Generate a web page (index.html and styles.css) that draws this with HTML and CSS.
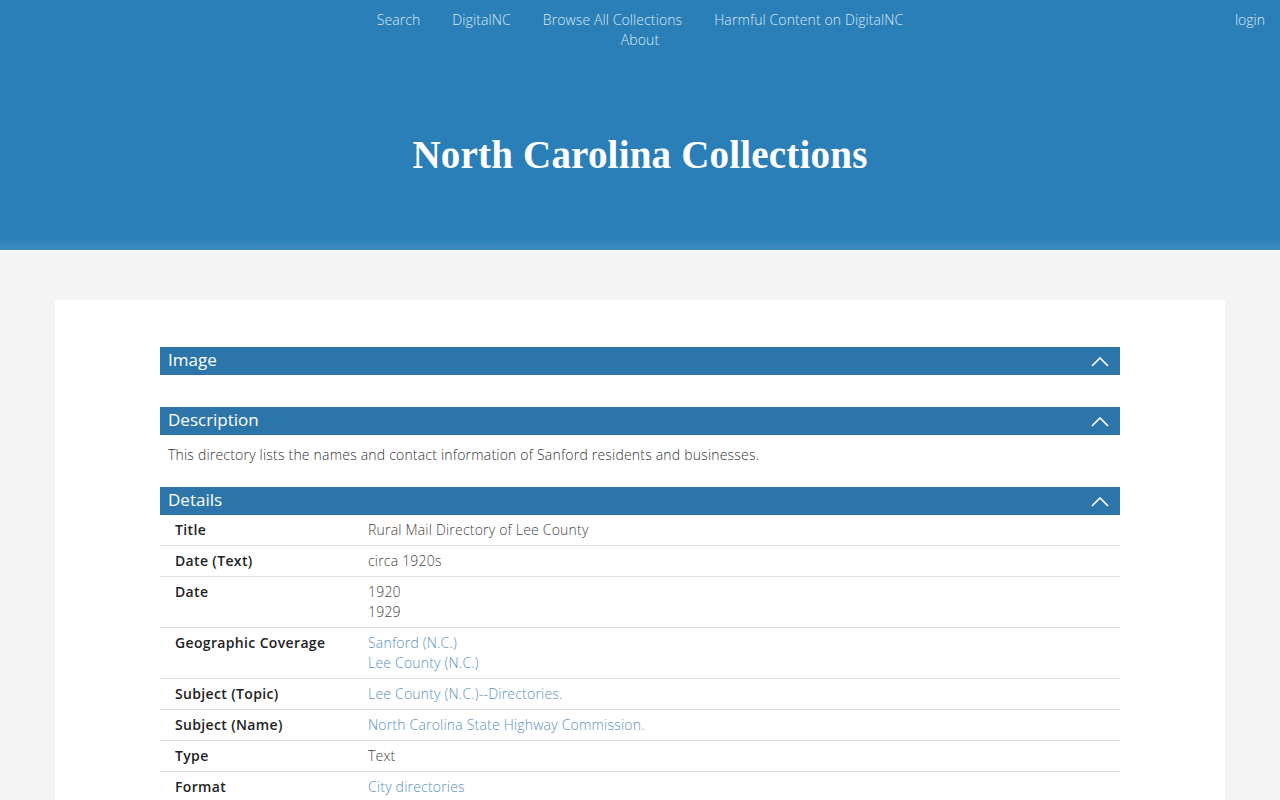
FILE: index.html
```html
<!DOCTYPE html>
<html lang="en">
<head>
<meta charset="utf-8">
<title>North Carolina Collections</title>
<link rel="stylesheet" href="styles.css">
</head>
<body>
<header class="site-header">
  <div class="topbar">
    <nav class="main-nav">
      <a href="#">Search</a>
      <a href="#">DigitalNC</a>
      <a href="#">Browse All Collections</a>
      <a href="#">Harmful Content on DigitalNC</a>
      <a href="#">About</a>
    </nav>
    <a class="login" href="#">login</a>
  </div>
  <h1 class="site-title">North Carolina Collections</h1>
</header>
<main class="page">
  <div class="card">
    <section class="panel">
      <h2 class="panel-head"><span class="panel-title">Image</span><svg class="chev" viewBox="0 0 18 11" width="18" height="11"><path d="M1 10 L9 2 L17 10" fill="none" stroke="#fff" stroke-width="1.6"/></svg></h2>
      <div class="panel-body empty"></div>
    </section>
    <section class="panel">
      <h2 class="panel-head"><span class="panel-title">Description</span><svg class="chev" viewBox="0 0 18 11" width="18" height="11"><path d="M1 10 L9 2 L17 10" fill="none" stroke="#fff" stroke-width="1.6"/></svg></h2>
      <div class="panel-body"><p class="desc">This directory lists the names and contact information of Sanford residents and businesses.</p></div>
    </section>
    <section class="panel">
      <h2 class="panel-head"><span class="panel-title">Details</span><svg class="chev" viewBox="0 0 18 11" width="18" height="11"><path d="M1 10 L9 2 L17 10" fill="none" stroke="#fff" stroke-width="1.6"/></svg></h2>
      <table class="details">
        <tr><th>Title</th><td>Rural Mail Directory of Lee County</td></tr>
        <tr><th>Date (Text)</th><td>circa 1920s</td></tr>
        <tr><th>Date</th><td>1920<br>1929</td></tr>
        <tr><th>Geographic Coverage</th><td><a href="#">Sanford (N.C.)</a><br><a href="#">Lee County (N.C.)</a></td></tr>
        <tr><th>Subject (Topic)</th><td><a href="#">Lee County (N.C.)--Directories.</a></td></tr>
        <tr><th>Subject (Name)</th><td><a href="#">North Carolina State Highway Commission.</a></td></tr>
        <tr><th>Type</th><td>Text</td></tr>
        <tr><th>Format</th><td><a href="#">City directories</a></td></tr>
        <tr><th>Language</th><td>English</td></tr>
      </table>
    </section>
  </div>
</main>
</body>
</html>
```

FILE: styles.css
```css
html, body {
  margin: 0;
  padding: 0;
}
body {
  background: #f4f4f4;
  font-family: "Open Sans", "Liberation Sans", sans-serif;
  color: #444;
}
a {
  text-decoration: none;
}
.site-header {
  background: linear-gradient(to bottom, #2a7fb8 0, #2a7fb8 238px, #3f8bbf 250px);
  height: 250px;
  box-sizing: border-box;
}
.topbar {
  position: relative;
  padding-top: 10px;
}
.main-nav {
  width: 580px;
  margin: 0 auto;
  display: flex;
  flex-wrap: wrap;
  justify-content: center;
  font-size: 14px;
  font-weight: 300;
  line-height: 20px;
  letter-spacing: 0.1px;
}
.main-nav a {
  color: #dbe9f5;
  padding: 0 16px;
}
.login {
  position: absolute;
  right: 15px;
  top: 10px;
  font-size: 14px;
  font-weight: 300;
  line-height: 20px;
  color: #dbe9f5;
}
.site-title {
  margin: 81px 0 0;
  text-align: center;
  font-family: "Liberation Serif", "DejaVu Serif", serif;
  font-weight: 700;
  font-size: 39px;
  line-height: 48px;
  color: #fff;
  letter-spacing: 0.2px;
}
.page {
  padding: 50px 55px 0;
}
.card {
  background: #fff;
  padding: 47px 105px 20px;
  min-height: 500px;
}
.panel {
  margin: 0;
}
.panel-head {
  margin: 0;
  height: 28px;
  background: #2c75ab;
  color: #fff;
  font-size: 17px;
  font-weight: 400;
  padding: 0 11px 0 8px;
  display: flex;
  justify-content: space-between;
  align-items: center;
}
.panel-title {
  line-height: 24px;
  margin-top: -2px;
}
.chev {
  display: block;
}
.panel-body.empty {
  height: 32px;
}
.desc {
  margin: 0;
  padding: 10px 8px 22px;
  font-size: 14px;
  font-weight: 300;
  line-height: 20px;
  color: #333;
  letter-spacing: 0.2px;
}
.details {
  width: 100%;
  border-collapse: collapse;
  font-size: 14px;
  line-height: 20px;
}
.details tr {
  border-bottom: 1px solid #dedede;
}
.details th {
  width: 193px;
  text-align: left;
  vertical-align: top;
  padding: 5px 0 5px 15px;
  font-weight: 600;
  color: #222;
  letter-spacing: 0.35px;
}
.details td {
  vertical-align: top;
  padding: 5px 0;
  font-weight: 300;
  color: #444;
  letter-spacing: 0.2px;
}
.details a {
  color: #5b92c0;
}
```
